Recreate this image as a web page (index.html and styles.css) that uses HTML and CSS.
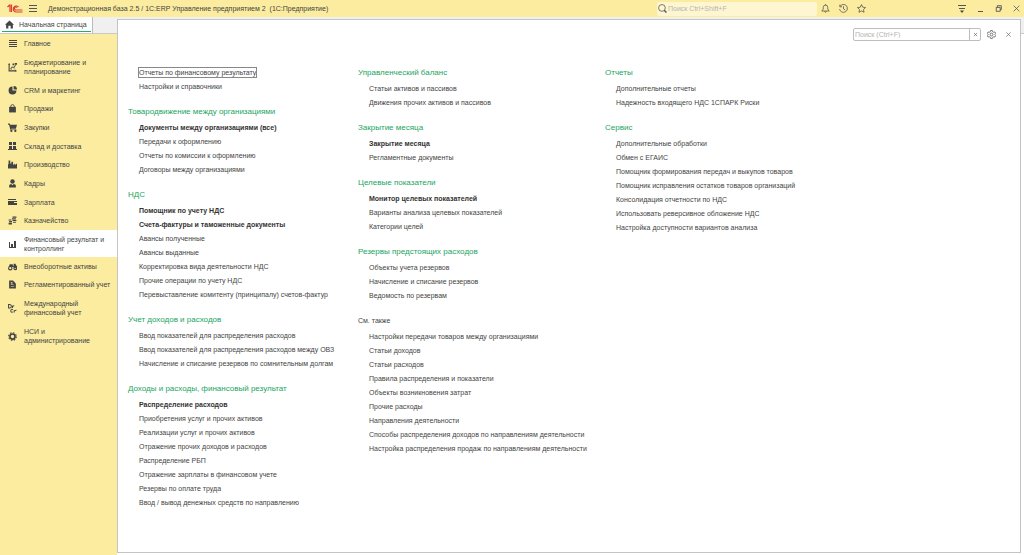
FILE: index.html
```html
<!DOCTYPE html>
<html lang="ru">
<head>
<meta charset="utf-8">
<title>1С:ERP Управление предприятием 2</title>
<link rel="stylesheet" href="styles.css">
</head>
<body>
<header class="titlebar">
  <svg class="logo" viewBox="0 0 32 22" aria-hidden="true"><g fill="none" stroke="#d9402f" stroke-width="2.4"><path d="M1 8l4-4h1v14M9 18V3"/><path d="M23 8a6 6 0 1 0-5 10h13"/><path d="M20 9a3 3 0 1 0-2 5h13"/></g></svg>
  <button class="icon-btn menu-btn" aria-label="Меню"><svg viewBox="0 0 9 9"><path d="M0 1.500h8M0 4.500h8M0 7.500h8" stroke-width="1"/></svg></button>
  <h1 class="app-title">Демонстрационная база 2.5 / 1С:ERP Управление предприятием 2&nbsp; (1С:Предприятие)</h1>
  <label class="global-search"><svg viewBox="0 0 16 16"><circle cx="7" cy="7" r="6"/><path d="M11 11l4 4" stroke-width="2.500"/></svg><input type="text" placeholder="Поиск Ctrl+Shift+F" aria-label="Глобальный поиск"></label>
  <div class="tools">
    <button class="icon-btn" aria-label="Уведомления"><svg viewBox="0 0 16 16"><path d="M1.500 12.500h13L12 9V6a4 4 0 0 0-8 0v3zM8 2V0M6.500 13l1.500 2 1.500-2"/></svg></button>
    <button class="icon-btn" aria-label="История"><svg viewBox="0 0 16 16"><path d="M2 4a7 7 0 1 1-1 5M1.500 1v4h4M8 4v4.500l3 2"/></svg></button>
    <button class="icon-btn" aria-label="Избранное"><svg viewBox="0 0 16 16"><path d="M8 1l2.200 4.700 5 .6-3.700 3.500 1 5L8 12.300l-4.500 2.500 1-5L.8 6.300l5-.6z"/></svg></button>
  </div>
  <div class="window-controls">
    <button class="icon-btn" aria-label="Параметры"><svg viewBox="0 0 9 9"><path d="M0 1.500h8M1 4.500h6" stroke-width="1"/><path d="M2 6.500h4L4 9z" fill="#444" stroke="none"/></svg></button>
    <button class="icon-btn" aria-label="Свернуть"><svg viewBox="0 0 9 9"><path d="M2 7.500h5" stroke-width="1"/></svg></button>
    <button class="icon-btn" aria-label="Восстановить"><svg viewBox="0 0 16 16"><path d="M4 6h7v7H4zM6 6V3h7v7h-2" stroke-width="1.600"/></svg></button>
    <button class="icon-btn" aria-label="Закрыть"><svg viewBox="0 0 16 16"><path d="M3 3l10 10M13 3L3 13"/></svg></button>
  </div>
</header>
<div class="workspace">
  <aside class="sidebar">
    <div class="tabs"><a class="tab" href="#"><svg viewBox="0 0 16 16"><path d="M8 1L0 8.500h2V15h4v-5h4v5h4V8.500h2z"/></svg>Начальная страница</a></div>
    <nav class="sections" aria-label="Разделы">
      <a href="#"><svg viewBox="0 0 9 9"><path d="M1 1h8v1H1zM1 3h8v1H1zM1 5h8v1H1zM1 7h8v1H1z"/></svg><span>Главное</span></a>
      <a href="#"><svg viewBox="0 0 16 16"><path d="M1 2h2v11h11v2H1zM0 3l2-3 2 3zM13 12l3 2-3 2zM4 10l3-4 3 1 3-4 1 1-3 5-3-1-3 3zM8 1h3v3H8zM12 0h4v3h-4zM5 11h2v1H5zM10 10h3v1h-3z"/></svg><span>Бюджетирование и<br>планирование</span></a>
      <a href="#"><svg viewBox="0 0 16 16"><path d="M8 1v7h7a7 7 0 1 1-7-7z"/><path d="M10 0a6 6 0 0 1 6 6h-6z"/></svg><span>CRM и маркетинг</span></a>
      <a href="#"><svg viewBox="0 0 16 16"><path d="M2 5h12v10H2z"/><path d="M5 8V4a3 3 0 0 1 6 0v4" fill="none" stroke="#444" stroke-width="1.500"/></svg><span>Продажи</span></a>
      <a href="#"><svg viewBox="0 0 16 16"><path d="M0 1h3l1 2h12l-2 7H5l1 1h9v1H4L2 3H0z"/><circle cx="6" cy="14" r="2"/><circle cx="13" cy="14" r="2"/></svg><span>Закупки</span></a>
      <a href="#"><svg viewBox="0 0 9 9"><path d="M1 0h3v3H1zM5 0h3v3H5zM1 4h3v3H1zM5 4h3v3H5zM0 7h9v1H0z"/></svg><span>Склад и доставка</span></a>
      <a href="#"><svg viewBox="0 0 16 16"><path d="M0 15V8l1-1V1h3v5h2V3h3v6l3-3v3l4-3v9z"/></svg><span>Производство</span></a>
      <a href="#"><svg viewBox="0 0 16 16"><circle cx="8" cy="4.500" r="4"/><path d="M2 15v-3q0-3 4-3l2 2 2-2q4 0 4 3v3z"/></svg><span>Кадры</span></a>
      <a href="#"><svg viewBox="0 0 9 9"><path d="M0 1h8v1H0zM0 3h9v4H0z"/><path d="M6 4h3v1H6z" fill="#fbec9f"/></svg><span>Зарплата</span></a>
      <a href="#"><svg viewBox="0 0 16 16"><path d="M8 1h7v2H8zM7 4h7v2H7zM8 7h7v2H8zM9 10h5v2H9zM1 6h5v2H1zM2 9h5v2H2zM1 12h6v3H1z"/></svg><span>Казначейство</span></a>
      <a href="#" class="current" aria-current="page"><svg viewBox="0 0 9 9"><path d="M1 2h1v5H1zM3 4h2v3H3zM6 1h2v6H6zM1 7h7v1H1z"/></svg><span>Финансовый результат и<br>контроллинг</span></a>
      <a href="#"><svg viewBox="0 0 16 16"><path d="M2 7l1-3h5l2 4V3h3l3 5v3h-5l-1-2H2z"/><g fill="none" stroke="#444" stroke-width="2"><circle cx="4" cy="11" r="3"/><circle cx="13" cy="11" r="2.500"/></g></svg><span>Внеоборотные активы</span></a>
      <a href="#"><svg viewBox="0 0 16 16"><path d="M2 1h7l5 5v9H2z"/><path d="M5 4h3v2H5zM5 8h5v1H5zM5 11h6v1H5z" fill="#fbec9f"/></svg><span>Регламентированный учет</span></a>
      <a href="#"><svg viewBox="0 0 16 16"><path d="M1 1v6h2q3 0 3-3T3 1zM8 7V3M8 5q0-2 3-2M9 10q-4-2-4 2t4 2M11 15v-4M11 13q0-2 4-2" fill="none" stroke="#444" stroke-width="1.800"/></svg><span>Международный<br>финансовый учет</span></a>
      <a href="#"><svg viewBox="0 0 16 16"><g fill="none" stroke="#444"><circle cx="8" cy="8" r="4.500" stroke-width="3"/><circle cx="8" cy="8" r="6.800" stroke-width="2" stroke-dasharray="2.700 2.640"/></g></svg><span>НСИ и<br>администрирование</span></a>
    </nav>
  </aside>
  <main class="desk">
    <section class="panel">
      <div class="panel-tools">
        <div class="panel-search"><input type="text" placeholder="Поиск (Ctrl+F)" aria-label="Поиск"><button aria-label="Очистить"><svg viewBox="0 0 16 16"><path d="M3 3l10 10M13 3L3 13"/></svg></button></div>
        <button class="icon-btn" aria-label="Настройки"><svg viewBox="0 0 16 16"><circle cx="8" cy="8" r="2.500"/><path d="M6.500 1h3l.5 2 2 1 2-.5 1.500 2.500L14 8l1.500 2-1.500 2.500-2-.5-2 1-.5 2h-3L6 13l-2-1-2 .5L.5 10 2 8 .5 6 2 3.500 4 4l2-1z"/></svg></button>
        <button class="icon-btn close" aria-label="Закрыть панель"><svg viewBox="0 0 16 16"><path d="M3 3l10 10M13 3L3 13"/></svg></button>
      </div>
      <div class="columns">
        <div class="column">
          <ul><li><a href="#" class="focused">Отчеты по финансовому результату</a></li><li><a href="#">Настройки и справочники</a></li></ul>
          <h2>Товародвижение между организациями</h2>
          <ul><li><a href="#" class="key">Документы между организациями (все)</a></li><li><a href="#">Передачи к оформлению</a></li><li><a href="#">Отчеты по комиссии к оформлению</a></li><li><a href="#">Договоры между организациями</a></li></ul>
          <h2>НДС</h2>
          <ul><li><a href="#" class="key">Помощник по учету НДС</a></li><li><a href="#" class="key">Счета-фактуры и таможенные документы</a></li><li><a href="#">Авансы полученные</a></li><li><a href="#">Авансы выданные</a></li><li><a href="#">Корректировка вида деятельности НДС</a></li><li><a href="#">Прочие операции по учету НДС</a></li><li><a href="#">Перевыставление комитенту (принципалу) счетов-фактур</a></li></ul>
          <h2>Учет доходов и расходов</h2>
          <ul><li><a href="#">Ввод показателей для распределения расходов</a></li><li><a href="#">Ввод показателей для распределения расходов между ОВЗ</a></li><li><a href="#">Начисление и списание резервов по сомнительным долгам</a></li></ul>
          <h2>Доходы и расходы, финансовый результат</h2>
          <ul><li><a href="#" class="key">Распределение расходов</a></li><li><a href="#">Приобретения услуг и прочих активов</a></li><li><a href="#">Реализации услуг и прочих активов</a></li><li><a href="#">Отражение прочих доходов и расходов</a></li><li><a href="#">Распределение РБП</a></li><li><a href="#">Отражение зарплаты в финансовом учете</a></li><li><a href="#">Резервы по оплате труда</a></li><li><a href="#">Ввод / вывод денежных средств по направлению</a></li></ul>
        </div>
        <div class="column">
          <h2>Управленческий баланс</h2>
          <ul><li><a href="#">Статьи активов и пассивов</a></li><li><a href="#">Движения прочих активов и пассивов</a></li></ul>
          <h2>Закрытие месяца</h2>
          <ul><li><a href="#" class="key">Закрытие месяца</a></li><li><a href="#">Регламентные документы</a></li></ul>
          <h2>Целевые показатели</h2>
          <ul><li><a href="#" class="key">Монитор целевых показателей</a></li><li><a href="#">Варианты анализа целевых показателей</a></li><li><a href="#">Категории целей</a></li></ul>
          <h2>Резервы предстоящих расходов</h2>
          <ul><li><a href="#">Объекты учета резервов</a></li><li><a href="#">Начисление и списание резервов</a></li><li><a href="#">Ведомость по резервам</a></li></ul>
          <h2 class="see-also">См. также</h2>
          <ul><li><a href="#">Настройки передачи товаров между организациями</a></li><li><a href="#">Статьи доходов</a></li><li><a href="#">Статьи расходов</a></li><li><a href="#">Правила распределения и показатели</a></li><li><a href="#">Объекты возникновения затрат</a></li><li><a href="#">Прочие расходы</a></li><li><a href="#">Направления деятельности</a></li><li><a href="#">Способы распределения доходов по направлениям деятельности</a></li><li><a href="#">Настройка распределения продаж по направлениям деятельности</a></li></ul>
        </div>
        <div class="column">
          <h2>Отчеты</h2>
          <ul><li><a href="#">Дополнительные отчеты</a></li><li><a href="#">Надежность входящего НДС 1СПАРК Риски</a></li></ul>
          <h2>Сервис</h2>
          <ul><li><a href="#">Дополнительные обработки</a></li><li><a href="#">Обмен с ЕГАИС</a></li><li><a href="#">Помощник формирования передач и выкупов товаров</a></li><li><a href="#">Помощник исправления остатков товаров организаций</a></li><li><a href="#">Консолидация отчетности по НДС</a></li><li><a href="#">Использовать реверсивное обложение НДС</a></li><li><a href="#">Настройка доступности вариантов анализа</a></li></ul>
        </div>
      </div>
    </section>
  </main>
</div>
</body>
</html>
```
FILE: styles.css
```css
* { box-sizing: border-box; }
body {
  margin: 0;
  min-height: 100vh;
  display: flex;
  flex-direction: column;
  font: 7px/9px "Liberation Sans", Arial, sans-serif;
  color: #444;
  background: #fff;
}
a { color: inherit; text-decoration: none; }
button, input { font: inherit; color: inherit; border: 0; padding: 0; margin: 0; background: none; }
input { min-width: 0; outline: 0; }
input::placeholder { color: #b5b5b0; opacity: 1; }
svg { display: block; flex: none; }
.icon-btn { width: 9px; height: 9px; flex: none; }
.icon-btn svg { width: 9px; height: 9px; }
.icon-btn svg, .global-search svg, .panel-search svg { fill: none; stroke: #555; stroke-width: 1.4; }

.titlebar {
  display: flex;
  align-items: center;
  height: 17px;
  padding: 0 3px 0 7px;
  background: #fbec9f;
}
.logo { width: 16px; height: 11px; }
.menu-btn { margin-left: 6px; }
.app-title { margin: 0 auto 0 10px; font-size: 7px; font-weight: normal; white-space: nowrap; }
.global-search {
  display: flex;
  align-items: center;
  gap: 1px;
  width: 160px;
  height: 14px;
  padding-left: 1px;
  border-radius: 2px;
  background: #fef6d0;
}
.global-search svg { width: 9px; height: 9px; }
.global-search input { flex: 1; }
.tools { display: flex; gap: 9px; margin-left: 4px; }
.window-controls { display: flex; gap: 9px; margin-left: 92px; }

.workspace { flex: 1; display: grid; grid-template-columns: 117px 1fr; }
.sidebar { background: #fbec9f; }
.tabs { height: 17px; padding-right: 24px; background: #f0f0f0; border-bottom: 1px solid #c9c9c9; }
.tab {
  display: flex;
  align-items: center;
  gap: 5px;
  height: 16px;
  padding: 0 0 1px 5px;
  background: linear-gradient(#2bab70, #2bab70) 2px 14px / 89px 1px no-repeat #fff;
  border-right: 1px solid #bbb;
  white-space: nowrap;
}
.tab svg, .sections svg { width: 9px; height: 9px; fill: #444; }
.sections { display: flex; flex-direction: column; }
.sections a { display: flex; align-items: center; gap: 7px; padding: 5px 0 5px 8px; }
.sections a:nth-child(3n), .sections .current { padding-bottom: 4px; }
.sections .current { background: #fff; }

.desk { display: flex; padding: 2px 3px 2px 0; background: linear-gradient(#f0f0f0 16px, #c9c9c9 16px, #c9c9c9 17px, #fff 17px); }
.panel { flex: 1; min-width: 0; background: #fff; border: 1px solid #c4c4c4; }
.panel-tools { display: flex; justify-content: flex-end; align-items: center; gap: 6px; padding: 8px 7px 0 0; }
.panel-search { display: flex; width: 128px; height: 13px; border: 1px solid #bdbdbd; border-radius: 2px; }
.panel-search input { flex: 1; padding-left: 1px; }
.panel-search button { width: 11px; border-left: 1px solid #bdbdbd; }
.panel-search svg { width: 5px; height: 5px; margin: 0 auto; stroke-width: 2; }
.close svg { width: 7px; height: 7px; margin: 0 auto; }
.close { margin-left: 2px; }
.columns { display: grid; grid-template-columns: 230px 247px 1fr; padding: 25px 0 0 10px; }
.column h2 { margin: 0; padding: 11px 0 2px; font-size: 8px; line-height: 14px; font-weight: normal; color: #1aa461; white-space: nowrap; }
.column h2:first-child { padding-top: 0; }
.column .see-also { font-size: 7px; color: #444; }
.column ul { margin: 0; padding: 0 0 0 11px; list-style: none; }
.column li { line-height: 14px; white-space: nowrap; }
.key { font-weight: bold; color: #333; }
.focused { padding: 1px 0; outline: 1px solid #888; }
```
